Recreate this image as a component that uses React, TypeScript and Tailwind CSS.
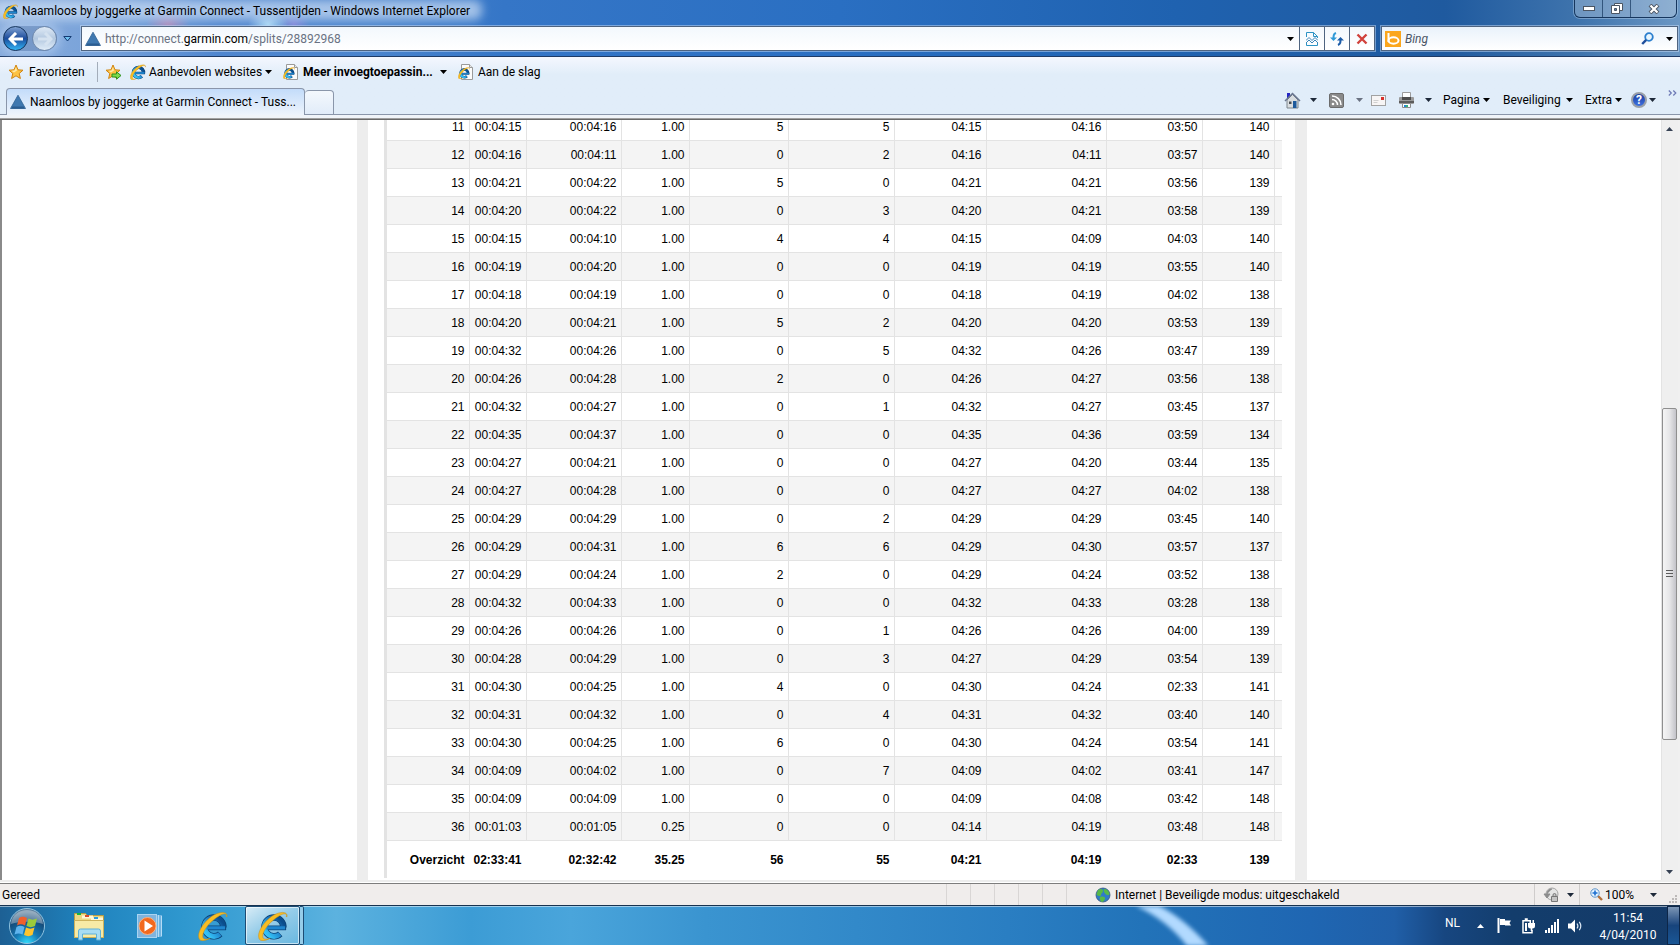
import { useId, useState } from "react";
import type { ReactNode } from "react";

const PAGE_TITLE = "Naamloos by joggerke at Garmin Connect - Tussentijden";
const PAGE_URL = "http://connect.garmin.com/splits/28892968";

// lap, time, moving time, distance, gain, loss, avg pace, moving pace, best pace, heart rate
const SPLITS = [
  ["11", "00:04:15", "00:04:16", "1.00", "5", "5", "04:15", "04:16", "03:50", "140"],
  ["12", "00:04:16", "00:04:11", "1.00", "0", "2", "04:16", "04:11", "03:57", "140"],
  ["13", "00:04:21", "00:04:22", "1.00", "5", "0", "04:21", "04:21", "03:56", "139"],
  ["14", "00:04:20", "00:04:22", "1.00", "0", "3", "04:20", "04:21", "03:58", "139"],
  ["15", "00:04:15", "00:04:10", "1.00", "4", "4", "04:15", "04:09", "04:03", "140"],
  ["16", "00:04:19", "00:04:20", "1.00", "0", "0", "04:19", "04:19", "03:55", "140"],
  ["17", "00:04:18", "00:04:19", "1.00", "0", "0", "04:18", "04:19", "04:02", "138"],
  ["18", "00:04:20", "00:04:21", "1.00", "5", "2", "04:20", "04:20", "03:53", "139"],
  ["19", "00:04:32", "00:04:26", "1.00", "0", "5", "04:32", "04:26", "03:47", "139"],
  ["20", "00:04:26", "00:04:28", "1.00", "2", "0", "04:26", "04:27", "03:56", "138"],
  ["21", "00:04:32", "00:04:27", "1.00", "0", "1", "04:32", "04:27", "03:45", "137"],
  ["22", "00:04:35", "00:04:37", "1.00", "0", "0", "04:35", "04:36", "03:59", "134"],
  ["23", "00:04:27", "00:04:21", "1.00", "0", "0", "04:27", "04:20", "03:44", "135"],
  ["24", "00:04:27", "00:04:28", "1.00", "0", "0", "04:27", "04:27", "04:02", "138"],
  ["25", "00:04:29", "00:04:29", "1.00", "0", "2", "04:29", "04:29", "03:45", "140"],
  ["26", "00:04:29", "00:04:31", "1.00", "6", "6", "04:29", "04:30", "03:57", "137"],
  ["27", "00:04:29", "00:04:24", "1.00", "2", "0", "04:29", "04:24", "03:52", "138"],
  ["28", "00:04:32", "00:04:33", "1.00", "0", "0", "04:32", "04:33", "03:28", "138"],
  ["29", "00:04:26", "00:04:26", "1.00", "0", "1", "04:26", "04:26", "04:00", "139"],
  ["30", "00:04:28", "00:04:29", "1.00", "0", "3", "04:27", "04:29", "03:54", "139"],
  ["31", "00:04:30", "00:04:25", "1.00", "4", "0", "04:30", "04:24", "02:33", "141"],
  ["32", "00:04:31", "00:04:32", "1.00", "0", "4", "04:31", "04:32", "03:40", "140"],
  ["33", "00:04:30", "00:04:25", "1.00", "6", "0", "04:30", "04:24", "03:54", "141"],
  ["34", "00:04:09", "00:04:02", "1.00", "0", "7", "04:09", "04:02", "03:41", "147"],
  ["35", "00:04:09", "00:04:09", "1.00", "0", "0", "04:09", "04:08", "03:42", "148"],
  ["36", "00:01:03", "00:01:05", "0.25", "0", "0", "04:14", "04:19", "03:48", "148"],
];

const SUMMARY = ["02:33:41", "02:32:42", "35.25", "56", "55", "04:21", "04:19", "02:33", "139"];

/* ---------- icons ---------- */

function IeIcon({ className }: { className: string }) {
  const id = useId();
  return (
    <svg viewBox="0 0 32 32" className={className} aria-hidden="true">
      <defs>
        <linearGradient id={id} x1="0" y1="0" x2="0" y2="1">
          <stop offset="0" stopColor="#0b4d8c" />
          <stop offset="0.45" stopColor="#1d7fc9" />
          <stop offset="1" stopColor="#35c1f5" />
        </linearGradient>
      </defs>
      <circle cx="17" cy="17" r="10" fill="none" stroke="#0a3f73" strokeWidth="7" strokeDasharray="54.500 8.300" transform="rotate(48 17 17)" />
      <path d="M9 18H30" stroke="#0a3f73" strokeWidth="5" />
      <circle cx="17" cy="17" r="10" fill="none" stroke={`url(#${id})`} strokeWidth="5.500" strokeDasharray="53.500 9.300" transform="rotate(50 17 17)" />
      <path d="M9 18H29" stroke="#1f86cf" strokeWidth="3.500" />
      <path
        d="M31 6C32 0 23 0 14 6 5 13-1 23 1 29c1 4 7 3 12 0-5 2-8 1-8-2 0-5 5-12 11-17C22 5 28 1.500 30 3.500c.6.800.500 1.500 0 2.500z"
        fill="#f7bd24"
        stroke="#c98a10"
        strokeWidth="0.5"
      />
    </svg>
  );
}

function PageIcon() {
  return (
    <span className="relative block h-4 w-4">
      <svg viewBox="0 0 16 16" className="absolute inset-0 size-4" aria-hidden="true">
        <path d="M3.500.5h8l3 3v12h-11z" fill="#fbfbfb" stroke="#9a9a9a" />
        <path d="M11.500.5v3h3" fill="#e8e8e8" stroke="#9a9a9a" />
      </svg>
      <IeIcon className="absolute top-[3px] left-0 size-3" />
    </span>
  );
}

function GarminIcon() {
  return (
    <svg viewBox="0 0 16 16" className="h-4 w-4 shrink-0" aria-hidden="true">
      <path d="M8 1.200 15.500 14.500H.5z" fill="#3f78b0" stroke="#2f6193" strokeWidth="0.8" strokeLinejoin="round" />
      <path d="M2.500 12.500h11l1.200 2H1.300z" fill="#2b5c90" />
    </svg>
  );
}

function StarIcon({ add = false }: { add?: boolean }) {
  return (
    <svg viewBox="0 0 17 16" className="h-4 w-[17px]" aria-hidden="true">
      <path
        d="M8 1l2 4.800 5 .4-3.800 3.300 1.200 5L8 11.800 3.600 14.500l1.200-5L1 6.200l5-.4z"
        fill="#fdc343"
        stroke="#d08411"
        strokeLinejoin="round"
      />
      <path d="M8 3l1 3.500-3 2-2.500-1.800 3-.2z" fill="#ffe9a6" />
      {add && <path d="M7 10h4.500V7.800L16 11.500l-4.500 3.700V13H7z" fill="#7fdc4c" stroke="#2f8f1d" />}
    </svg>
  );
}

function Caret({ className = "text-black" }: { className?: string }) {
  return (
    <svg viewBox="0 0 7 4" className={`h-1 w-[7px] shrink-0 ${className}`} aria-hidden="true">
      <path d="M0 0h7L3.500 4z" fill="currentColor" />
    </svg>
  );
}

function HomeIcon() {
  return (
    <svg viewBox="0 0 17 17" className="size-[17px]" aria-hidden="true">
      <path d="M3 1h3v5H3z" fill="#2525c4" />
      <path d="M3 8l5.500-5.500L14 8v8H3z" fill="#d9dde0" stroke="#7d858c" />
      <path d="M1 9l7.500-7.500L16 9" fill="none" stroke="#6a7690" strokeWidth="1.500" />
      <path d="M9 9h3.500v7H9z" fill="#1e5a9c" />
      <path d="M5 9.500h2.500V12H5z" fill="#4a4f55" />
    </svg>
  );
}

function FeedIcon() {
  return (
    <svg viewBox="0 0 15 15" className="size-[15px]" aria-hidden="true">
      <rect x="0.500" y="0.500" width="14" height="14" rx="1.500" fill="#8a8a8a" stroke="#6c6c6c" />
      <circle cx="4" cy="11" r="1.300" fill="#fff" />
      <path d="M3 6.500A5.500 5.500 0 0 1 8.500 12M3 3a9 9 0 0 1 9 9" fill="none" stroke="#fff" strokeWidth="1.500" />
    </svg>
  );
}

function MailIcon() {
  return (
    <svg viewBox="0 0 15 11" className="h-[11px] w-[15px]" aria-hidden="true">
      <rect x="0.500" y="0.500" width="14" height="10" fill="#f7f5f5" stroke="#a2a2a2" />
      <path d="M2.500 5.500h5M2.500 7.500h4" stroke="#d0d0d0" />
      <rect x="10" y="2" width="3" height="3" fill="#d8302a" />
    </svg>
  );
}

function PrinterIcon() {
  return (
    <svg viewBox="0 0 17 16" className="h-4 w-[17px]" aria-hidden="true">
      <path d="M4.500.5h8V7h-8z" fill="#fff" stroke="#9c9c9c" />
      <rect x="1" y="5" width="15" height="7" rx="1" fill="#9a9a9a" />
      <path d="M4 5h9v3H4z" fill="#4e4e4e" />
      <path d="M1 9h15v2H1z" fill="#5c5c5c" />
      <path d="M4.500 11.500h8v4h-8z" fill="#fff" stroke="#8b8b8b" />
      <path d="M6 13h2v2H6z" fill="#2387d6" />
      <path d="M8 13h2v2H8z" fill="#37b37a" />
    </svg>
  );
}

function HelpIcon() {
  return (
    <span className="flex size-4 items-center justify-center rounded-full border-2 border-[#9aa0a8] bg-linear-to-b from-[#1a3aa0] to-[#3f72e0] text-xs leading-3 font-bold text-white">
      ?
    </span>
  );
}

function StartOrb() {
  const id = useId();
  return (
    <svg viewBox="0 0 38 38" className="size-[38px]" aria-hidden="true">
      <defs>
        <radialGradient id={id} cx="0.5" cy="1" r="0.900">
          <stop offset="0" stopColor="#33e0ff" />
          <stop offset="0.400" stopColor="#1479b5" />
          <stop offset="0.800" stopColor="#154a78" />
          <stop offset="1" stopColor="#5c7f9c" />
        </radialGradient>
      </defs>
      <circle cx="19" cy="19" r="17.500" fill={`url(#${id})`} stroke="#8fc3e0" />
      <path d="M3 17C4 8 11 3 19 3s15 5 16 14c-9-3-23-3-32 0z" fill="#fff" opacity="0.350" />
      <path d="M11 11c3-2 5-1.500 8 0l-2 7.500c-3-1.500-5-1.700-8 0z" fill="#f0602c" />
      <path d="M20.500 11.500c3 1.500 5 1.500 8.500 0L27 19c-3 1.500-5.500 1.500-8.500 0z" fill="#9ccb3b" />
      <path d="M8.500 20c3-1.700 5-1.500 8 0l-2 7.500c-3-1.500-5-1.500-8 0z" fill="#5fb4ee" />
      <path d="M18 20.500c3 1.500 5.500 1.500 8.500 0l-2 7.500c-3 1.500-5.500 1.500-8.500 0z" fill="#fcc42e" />
    </svg>
  );
}

function ExplorerIcon() {
  return (
    <svg viewBox="0 0 33 30" className="h-[30px] w-[33px]" aria-hidden="true">
      <path d="M1.500 2.500h11l2 2h16v22h-29z" fill="#edd983" stroke="#b99b43" />
      <path d="M4 2h4v2H4z" fill="#16b33c" />
      <path d="M9 4.500h11v3H9z" fill="#fff7d8" />
      <path d="M12 4h4v2h-4z" fill="#d84a2c" />
      <path d="M18 6.500h12v3H18z" fill="#fff7d8" />
      <path d="M21 6h4v2h-4z" fill="#2b9be0" />
      <path d="M1.500 9.500h29v17h-29z" fill="#f7eaa6" stroke="#cdb25c" />
      <path d="M5.500 29V20q0-2 2-2h18q2 0 2 2v9h-4v-6h-14v6z" fill="#a8dcf3" stroke="#5fb0d8" />
    </svg>
  );
}

function MediaPlayerIcon() {
  return (
    <svg viewBox="0 0 28 26" className="h-[26px] w-7" aria-hidden="true">
      <path d="M19 2h6v22h-6z" fill="#6fb3e0" />
      <path d="M21.500 2v22M24.500 3v20" stroke="#b5dcf5" />
      <rect x="0.500" y="1.500" width="19" height="23" fill="#7fb4de" stroke="#a9d4f1" />
      <circle cx="10.500" cy="13" r="8.500" fill="#f2691e" stroke="#fbb07f" />
      <path d="M7.500 7.500v11l8.500-5.500z" fill="#fff" />
    </svg>
  );
}

function GlobeIcon() {
  return (
    <svg viewBox="0 0 16 16" className="size-4" aria-hidden="true">
      <circle cx="8" cy="8" r="7" fill="#2f7bc8" stroke="#36577c" strokeWidth="0.800" />
      <path d="M3 3c3-2 5-1 5 1S6 6 6 8 3 9 1.500 7.500zM9 2c3 0 5 2 5.500 5-1 2-3 1-4 0S8 4 9 2zM5 10c3-1 6 0 5 2s-2 3-3 3-3-3-2-5z" fill="#58b947" />
    </svg>
  );
}

/* ---------- browser chrome ---------- */

function WindowControls() {
  return (
    <div className="flex h-[18px] w-[103px] shrink-0 overflow-hidden rounded-b-md border border-t-0 border-[#16365e] bg-white/25 shadow-[0_0_0_1px_rgba(190,215,240,0.4)]">
      <button type="button" aria-label="Minimaliseren" className="flex w-7 items-center justify-center border-r border-[#16365e]/70">
        <svg viewBox="0 0 12 5" className="h-[5px] w-3">
          <rect x="0.500" y="0.500" width="11" height="4" fill="#fff" stroke="#4b5563" />
        </svg>
      </button>
      <button type="button" aria-label="Herstellen" className="flex w-7 items-center justify-center border-r border-[#16365e]/70">
        <svg viewBox="0 0 12 11" className="h-[11px] w-3">
          <path d="M3.500.5h8v7h-8z" fill="#fff" stroke="#4b5563" />
          <path d="M.5 2.500h8v8h-8z" fill="#fff" stroke="#4b5563" />
          <path d="M3.500 5.500h2v2h-2z" fill="#5e86b5" stroke="#4b5563" />
        </svg>
      </button>
      <button type="button" aria-label="Sluiten" className="flex flex-1 items-center justify-center">
        <svg viewBox="0 0 12 10" className="h-2.5 w-3">
          <path d="M2 1l8 8M10 1L2 9" stroke="#4b5563" strokeWidth="4" />
          <path d="M2.500 1.500l7 7M9.500 1.500l-7 7" stroke="#fff" strokeWidth="2.200" />
        </svg>
      </button>
    </div>
  );
}

function TitleBar() {
  return (
    <div className="flex h-[26px] items-start justify-between pr-[3px]">
      <div className="relative flex items-center gap-1 pt-[3px] pl-[3px]">
        <span className="absolute top-0 -right-3 -left-2 h-5 rounded-lg bg-[#cfe0f5]/70 blur-[5px]" />
        <IeIcon className="relative size-[15px]" />
        <h1 className="relative text-xs text-black">{PAGE_TITLE} - Windows Internet Explorer</h1>
      </div>
      <WindowControls />
    </div>
  );
}

function AddressField() {
  const [isEditing, setIsEditing] = useState(false);
  const [url, setUrl] = useState(PAGE_URL);

  if (isEditing) {
    return (
      <input
        autoFocus
        aria-label="Adres"
        value={url}
        onChange={(e) => setUrl(e.target.value)}
        onBlur={() => setIsEditing(false)}
        className="h-full flex-1 bg-transparent text-xs outline-none"
      />
    );
  }

  const [, before, domain, after] = url.match(/^(.*?)([^./]+\.[^./]+)(\/.*)$/) ?? ["", "", url, ""];

  return (
    <button type="button" onClick={() => setIsEditing(true)} className="h-full flex-1 cursor-text text-left text-xs text-gray-500">
      {before}
      <span className="text-black">{domain}</span>
      {after}
    </button>
  );
}

function NavigationBar() {
  return (
    <div className="flex h-[30px] items-start pl-[3px]">
      <div className="flex w-[77px] items-center">
        <div className="flex items-center gap-1 rounded-full bg-[#6f8fbd]/60 shadow-[0_0_10px_4px_rgba(205,225,250,0.45)]">
          <button type="button" aria-label="Terug" className="flex size-[25px] items-center justify-center rounded-full border border-[#16365e] bg-linear-to-b from-[#7d9fd0] via-[#1c4c9c] to-[#35b5f5]">
            <svg viewBox="0 0 16 14" className="h-3.5 w-4">
              <path d="M8 1L2 7l6 6M2.500 7H15" fill="none" stroke="#fff" strokeWidth="3" />
            </svg>
          </button>
          <button type="button" aria-label="Vooruit" disabled className="flex size-[25px] items-center justify-center rounded-full border border-[#6d87ab] bg-linear-to-b from-[#dfeaf6] via-[#b3c8e0] to-[#e0ecf8]">
            <svg viewBox="0 0 16 14" className="h-3.5 w-4">
              <path d="M8 1l6 6-6 6M13.500 7H1" fill="none" stroke="#d5e2f0" strokeWidth="3" />
            </svg>
          </button>
        </div>
        <button type="button" aria-label="Recente pagina's" className="ml-1.5">
          <svg viewBox="0 0 9 6" className="h-1.5 w-[9px]">
            <path d="M.8.5h7.400L4.500 5z" fill="#6fc0f0" stroke="#143a72" />
          </svg>
        </button>
      </div>

      <div className="ml-px flex h-[25px] flex-1 items-stretch border border-[#4f6480] bg-linear-to-b from-[#f3f8fd] to-white shadow-[0_0_0_1px_rgba(200,220,245,0.5)]">
        <div className="flex flex-1 items-center gap-1 pl-[3px]">
          <GarminIcon />
          <AddressField />
        </div>
        <button type="button" aria-label="Adreslijst" className="flex w-[17px] items-center justify-center">
          <Caret />
        </button>
        <button type="button" aria-label="Compatibiliteitsweergave" className="flex w-[25px] items-center justify-center border-l border-[#4f6480]">
          <svg viewBox="0 0 12 14" className="h-3.5 w-3">
            <path d="M.5 5V.5h7l4 4V6M.5 10v3.500h11V10M7.500.5v4h4" fill="none" stroke="#2d93c4" />
            <path d="M0 8.500l3-3 3 3 3-3 3 3M0 11l3-3 3 3 3-3 3 3" fill="none" stroke="#3c85b8" />
          </svg>
        </button>
        <button type="button" aria-label="Vernieuwen" className="flex w-[25px] items-center justify-center border-l border-[#4f6480]">
          <svg viewBox="0 0 14 14" className="size-3.5">
            <path d="M6 1C3.500 2 3.500 3.500 3.500 7" fill="none" stroke="#2f9ad8" strokeWidth="2" />
            <path d="M0 5.500h7L3.500 9z" fill="#2f9ad8" />
            <path d="M8 13c2.500-1 2.500-2.500 2.500-6" fill="none" stroke="#1c5ca8" strokeWidth="2" />
            <path d="M7 8.500h7L10.500 5z" fill="#1c5ca8" />
          </svg>
        </button>
        <button type="button" aria-label="Stoppen" className="flex w-[25px] items-center justify-center border-l border-[#4f6480]">
          <svg viewBox="0 0 12 12" className="size-3">
            <path d="M1.500 1.500l9 9M10.500 1.500l-9 9" stroke="#d1423c" strokeWidth="2.400" />
          </svg>
        </button>
      </div>

      <form className="mr-0.5 ml-1.5 flex h-[25px] w-[297px] items-center border border-[#4f6480] bg-linear-to-b from-[#e9f2fb] to-white pl-[3px] shadow-[0_0_0_1px_rgba(200,220,245,0.5)]">
        <svg viewBox="0 0 16 16" className="size-4" aria-hidden="true">
          <path d="M0 0h16v16H0z" fill="#fba61c" />
          <path d="M3.500 2v9" stroke="#fff" strokeWidth="2" />
          <ellipse cx="8.500" cy="9.500" rx="5" ry="3.200" fill="none" stroke="#fff" strokeWidth="2" />
        </svg>
        <input aria-label="Zoeken" placeholder="Bing" className="ml-1 h-full min-w-0 flex-1 bg-transparent text-xs italic outline-none placeholder:text-gray-600" />
        <button type="submit" aria-label="Zoeken met Bing" className="pr-2">
          <svg viewBox="0 0 13 13" className="size-[13px]">
            <circle cx="8" cy="5" r="3.800" fill="#e8f6ff" stroke="#2c7fce" strokeWidth="1.800" />
            <path d="M5.200 7.800L1.200 12" stroke="#1f4f9c" strokeWidth="2.400" />
          </svg>
        </button>
        <button type="button" aria-label="Zoekopties" className="px-1">
          <Caret />
        </button>
      </form>
    </div>
  );
}

function FavoritesBar() {
  return (
    <div className="flex h-[31px] items-center pb-0.5 pl-2 text-xs">
      <button type="button" className="flex w-[88px] items-center gap-1">
        <StarIcon />
        Favorieten
      </button>
      <span className="ml-px h-5 w-px bg-[#a3adba]" />
      <button type="button" aria-label="Toevoegen aan de werkbalk Favorieten" className="ml-[7px]">
        <StarIcon add />
      </button>
      <button type="button" className="ml-2 flex w-[153px] items-center">
        <IeIcon className="size-4" />
        <span className="ml-[3px] flex-1 text-left whitespace-nowrap">Aanbevolen websites</span>
        <span className="pr-[11px]">
          <Caret />
        </span>
      </button>
      <button type="button" className="flex w-[175px] items-center font-bold">
        <PageIcon />
        <span className="ml-1 flex-1 text-left whitespace-nowrap">Meer invoegtoepassin...</span>
        <span className="pr-[11px]">
          <Caret />
        </span>
      </button>
      <a href="#aan-de-slag" className="flex items-center gap-1">
        <PageIcon />
        Aan de slag
      </a>
    </div>
  );
}

function MenuButton({ label, className }: { label: string; className: string }) {
  return (
    <button type="button" className={`flex items-center justify-between ${className}`}>
      {label}
      <Caret />
    </button>
  );
}

function CommandBar() {
  return (
    <div className="flex h-full items-center pb-0.5 text-xs">
      <button type="button" aria-label="Startpagina" className="flex w-[45px] items-center gap-2">
        <HomeIcon />
        <Caret className="ml-px text-gray-800" />
      </button>
      <button type="button" aria-label="Feeds" disabled className="flex w-[42px] items-center gap-3">
        <FeedIcon />
        <Caret className="text-gray-500" />
      </button>
      <button type="button" aria-label="E-mail lezen" className="w-[27px]">
        <MailIcon />
      </button>
      <button type="button" aria-label="Afdrukken" className="flex w-[45px] items-center gap-2.5">
        <PrinterIcon />
        <Caret className="text-gray-800" />
      </button>
      <MenuButton label="Pagina" className="mr-[13px] w-[47px]" />
      <MenuButton label="Beveiliging" className="mr-3 w-[70px]" />
      <MenuButton label="Extra" className="mr-[9px] w-[37px]" />
      <button type="button" aria-label="Help" className="flex items-center gap-0.5">
        <HelpIcon />
        <Caret className="text-gray-800" />
      </button>
      <button type="button" aria-label="Meer opdrachten" className="mr-[3px] ml-3 self-start pt-0.5">
        <svg viewBox="0 0 9 6" className="h-1.5 w-[9px]">
          <path d="M.8.5L3.300 3 .8 5.500M5.300.5L7.800 3 5.300 5.500" fill="none" stroke="#6d78b5" strokeWidth="1.200" />
        </svg>
      </button>
    </div>
  );
}

function TabBar() {
  return (
    <div className="flex h-[27px] items-stretch justify-between">
      <div className="flex flex-1 items-end">
        <span className="w-1.5 self-stretch border-b border-[#8a96aa]" />
        <button type="button" className="flex h-[27px] w-[299px] items-center gap-1 rounded-t border border-b-0 border-[#8a96aa] bg-linear-to-b from-[#c3dcfa] to-[#eef4fc] pl-[3px] text-xs">
          <GarminIcon />
          <span className="whitespace-nowrap">Naamloos by joggerke at Garmin Connect - Tuss...</span>
        </button>
        <button type="button" aria-label="Nieuw tabblad" className="h-[25px] w-[29px] rounded-t border border-l-0 border-[#8a96aa] bg-linear-to-b from-[#f4f8fd] to-[#e1ecf9]" />
        <span className="flex-1 self-stretch border-b border-[#8a96aa]" />
      </div>
      <div className="border-b border-[#8a96aa]">
        <CommandBar />
      </div>
    </div>
  );
}

/* ---------- page ---------- */

function SplitsTable() {
  return (
    <table className="w-full table-fixed border-separate border-spacing-0 border-l-[3px] border-[#e3e3e3] text-right text-xs text-black">
      <colgroup>
        <col className="w-[83px]" />
        <col className="w-[57px]" />
        <col className="w-[95px]" />
        <col className="w-[68px]" />
        <col className="w-[99px]" />
        <col className="w-[106px]" />
        <col className="w-[92px]" />
        <col className="w-[120px]" />
        <col className="w-[96px]" />
        <col className="w-[72px]" />
        <col />
      </colgroup>
      <tbody>
        {SPLITS.map(([lap, ...values]) => (
          <tr key={lap} className="h-7 even:bg-[#f4f4f4]">
            <th scope="row" className="border-r border-b border-[#e3e3e3] p-0 pr-1 text-right font-normal">
              {lap}
            </th>
            {values.map((value, i) => (
              <td key={i} className="border-r border-b border-[#e3e3e3] p-0 pr-1">
                {value}
              </td>
            ))}
            <td className="border-b border-[#e3e3e3] p-0" />
          </tr>
        ))}
      </tbody>
      <tfoot>
        <tr className="h-[37px] font-bold">
          <th scope="row" className="p-0 pr-[5px] text-right">
            Overzicht
          </th>
          {SUMMARY.map((value, i) => (
            <td key={i} className="p-0 pr-[5px]">
              {value}
            </td>
          ))}
          <td className="p-0" />
        </tr>
      </tfoot>
    </table>
  );
}

function Scrollbar() {
  return (
    <div className="flex w-[17px] shrink-0 flex-col items-stretch border-l border-[#e3e3e3] bg-[#efefef] pr-px">
      <button type="button" aria-label="Omhoog" className="flex h-[17px] items-center justify-center">
        <Caret className="rotate-180 text-gray-700" />
      </button>
      <div className="flex-[272]" />
      <div className="flex flex-[331] items-center justify-center rounded-xs border border-[#8f8f8f] bg-linear-to-r from-[#f5f5f5] via-[#e6e6e8] to-[#c3c3c9]">
        <svg viewBox="0 0 7 8" className="h-2 w-[7px]" aria-hidden="true">
          <path d="M0 .5h7M0 3.500h7M0 6.500h7" stroke="#5c5c5c" />
        </svg>
      </div>
      <div className="flex-[123]" />
      <button type="button" aria-label="Omlaag" className="flex h-[17px] items-center justify-center">
        <Caret className="text-gray-700" />
      </button>
    </div>
  );
}

function StatusBar() {
  return (
    <footer className="flex h-[22px] shrink-0 items-center border-t border-[#7d7d7d] bg-[#f0edec] pl-0.5 text-xs">
      <span className="flex-1">Gereed</span>
      <div className="flex items-stretch self-stretch">
        {[0, 1, 2, 3, 4].map((i) => (
          <span key={i} className="w-6 border-l border-[#d9d6d5]" />
        ))}
      </div>
      <div className="flex h-full w-[468px] items-center gap-1 border-l border-[#d9d6d5] pl-7">
        <GlobeIcon />
        Internet | Beveiligde modus: uitgeschakeld
      </div>
      <button type="button" aria-label="Beveiligde modus" className="flex h-full w-[45px] items-center gap-2 border-l border-[#cfcccb] pl-2">
        <svg viewBox="0 0 16 16" className="size-4">
          <circle cx="9" cy="7" r="6" fill="#e4e4e4" stroke="#a5a5a5" />
          <path d="M1 7h6L4 11zM4 7c0-3 2-5 5-5" fill="#8c8c8c" stroke="#8c8c8c" />
          <path d="M8.500 9.500h6v5h-6zM10 9.500v-1.500q0-1.500 1.500-1.500T13 8v1.500" fill="#c4c4c4" stroke="#777" />
        </svg>
        <Caret className="text-gray-800" />
      </button>
      <button type="button" className="flex h-full w-[89px] items-center border-l border-[#cfcccb] pl-2.5">
        <svg viewBox="0 0 13 13" className="size-[13px]" aria-hidden="true">
          <path d="M8 8l4 4" stroke="#b3713c" strokeWidth="2.400" />
          <circle cx="5" cy="5" r="4.200" fill="#e6f3ff" stroke="#5d93c8" />
          <path d="M2.500 5h5M5 2.500v5" stroke="#1d6fd0" strokeWidth="1.600" />
        </svg>
        <span className="ml-0.5 flex-1 text-left">100%</span>
        <Caret className="mr-[11px] text-gray-800" />
      </button>
      <svg viewBox="0 0 10 10" className="mr-0.5 mb-px size-2.5 self-end" aria-hidden="true">
        <path d="M7 1h2v2H7zM7 4h2v2H7zM7 7h2v2H7zM4 4h2v2H4zM4 7h2v2H4zM1 7h2v2H1z" fill="#bdb9b8" />
      </svg>
    </footer>
  );
}

/* ---------- taskbar ---------- */

function TaskButton({ label, className, children }: { label: string; className: string; children: ReactNode }) {
  return (
    <button type="button" aria-label={label} className={`flex items-center justify-center ${className}`}>
      {children}
    </button>
  );
}

function Tray() {
  return (
    <div className="relative flex items-stretch text-xs text-white">
      <button type="button" className="mb-1.5 self-center pr-[17px]">
        NL
      </button>
      <button type="button" aria-label="Verborgen pictogrammen" className="flex items-center pr-[13px]">
        <Caret className="rotate-180" />
      </button>
      <button type="button" aria-label="Onderhoudscentrum" className="w-[25px]">
        <svg viewBox="0 0 15 15" className="size-[15px]">
          <path d="M1.500 0v15" stroke="#fff" strokeWidth="2" />
          <path d="M3 1h5v1.500h6L12.500 5 14 7.500H8V7H3z" fill="#fff" />
        </svg>
      </button>
      <button type="button" aria-label="Batterij" className="w-[23px]">
        <svg viewBox="0 0 14 16" className="h-4 w-3.5">
          <path d="M8 2.800H5V1H3.500v1.800H1v12h9V12" fill="none" stroke="#fff" strokeWidth="1.500" />
          <path d="M6 5h7v3q0 2.500-2.700 2.500V13H8.700v-2.500Q6 10.500 6 8zM7.500 2H9v3H7.500zM10.500 2H12v3h-1.500z" fill="#fff" />
          <path d="M3 5h2v8H3z" fill="#fff" />
        </svg>
      </button>
      <button type="button" aria-label="Netwerk" className="w-[23px]">
        <svg viewBox="0 0 16 14" className="h-3.5 w-4">
          <path d="M0 11h2v3H0zM3 9h2v5H3zM6 6h2v8H6zM9 3h2v11H9zM12 0h2v14h-2z" fill="#fff" />
        </svg>
      </button>
      <button type="button" aria-label="Volume" className="w-[21px]">
        <svg viewBox="0 0 16 14" className="h-3.5 w-4">
          <path d="M0 4.500h3L7 .5v13L3 9.500H0z" fill="#fff" />
          <path d="M9 4.500q1.800 2.500 0 5M11.300 2.800q3 4.200 0 8.400" fill="none" stroke="#dbe7f4" strokeWidth="1.200" />
        </svg>
      </button>
      <button type="button" className="flex w-[78px] flex-col items-center justify-center pt-0.5 leading-[17px]">
        <span>11:54</span>
        <span>4/04/2010</span>
      </button>
      <button type="button" aria-label="Bureaublad weergeven" className="w-[13px] border border-[#0d2648] bg-linear-to-b from-[#7d96b5] via-[#17447c] to-[#1a5796]" />
    </div>
  );
}

function Taskbar() {
  return (
    <nav className="relative flex h-10 shrink-0 items-stretch justify-between overflow-hidden border-t border-[#17324f]">
      {/* wallpaper showing through the glass */}
      <div className="absolute inset-0 bg-[linear-gradient(90deg,#1d6094_0%,#1f82bd_5%,#2f98cf_11%,#45a6d8_16%,#5cb2df_20%,#3c9cd5_28%,#4aa5db_34%,#3a94d0_42%,#2a7ec2_60%,#2273b9_68%,#1f66b2_78%,#205fa8_83%,#174680_86%,#133d6c_90%,#143a68_100%)]" />
      <svg viewBox="0 0 90 40" className="absolute inset-y-0 left-[67%] h-10 w-[90px] blur-[2px]" aria-hidden="true">
        <path d="M-6-6Q38 8 64 44H86Q52 4 18-6z" fill="#b2daff" />
      </svg>
      <span className="absolute inset-x-0 top-0 h-px bg-white/50" />
      <div className="relative flex items-stretch">
        <TaskButton label="Start" className="w-[54px]">
          <StartOrb />
        </TaskButton>
        <TaskButton label="Windows Verkenner" className="w-[70px]">
          <ExplorerIcon />
        </TaskButton>
        <TaskButton label="Windows Media Player" className="w-[53px]">
          <MediaPlayerIcon />
        </TaskButton>
        <TaskButton label="Internet Explorer" className="w-[68px] pl-1">
          <IeIcon className="size-[30px]" />
        </TaskButton>
        <TaskButton
          label={PAGE_TITLE}
          className="w-[55px] rounded-xs border border-[#1c4c74] bg-linear-to-br from-white/80 via-white/40 to-white/15 shadow-[inset_0_0_0_1px_rgba(255,255,255,0.6)]"
        >
          <IeIcon className="size-[30px]" />
        </TaskButton>
        <span className="w-1 rounded-r-xs border border-l-0 border-[#1c4c74] bg-white/40" />
      </div>
      <Tray />
    </nav>
  );
}

export default function App() {
  return (
    <div className="flex h-screen min-w-[1200px] flex-col overflow-hidden bg-white font-['Roboto','Liberation_Sans',sans-serif] text-black">
      <header className="shrink-0">
        <div className="h-[57px] border-b border-[#1d3a66] bg-[radial-gradient(ellipse_22px_14px_at_168px_24px,rgba(214,130,170,0.6),transparent),radial-gradient(ellipse_20px_14px_at_268px_24px,rgba(190,235,255,0.8),transparent),radial-gradient(ellipse_16px_12px_at_294px_24px,rgba(170,130,225,0.5),transparent),linear-gradient(90deg,#86aadb_0%,#79a3da_6%,#4f86cf_13%,#4a84cd_22%,#3576c7_30%,#2a6fc2_50%,#1f62b0_70%,#1f5a9f_86%,#3f74ad_94%,#6b97c4_100%)]">
          <TitleBar />
          <NavigationBar />
        </div>
        <div className="bg-linear-to-b from-[#f4f7fe] to-[#e1edf9] to-30%">
          <FavoritesBar />
          <TabBar />
        </div>
        <div className="h-[5px] border-b border-[#696969] bg-[#f0f4f9] shadow-[inset_0_-1px_0_#a0a0a0]" />
      </header>

      <div className="flex min-h-0 flex-1 border-r-2 border-l-2 border-r-[#f0f0f0] border-l-[#8a8a8a] bg-white font-['Liberation_Sans',Arial,sans-serif]">
        <main className="flex min-w-0 flex-1 flex-col items-center justify-end overflow-hidden">
          <div className="w-[950px] border-r-[12px] border-l-[11px] border-[#ededed] pr-[13px] pb-0.5 pl-4">
            <SplitsTable />
          </div>
        </main>
        <Scrollbar />
      </div>
      <div className="h-[3px] shrink-0 border-b border-white bg-[#ededed]" />

      <StatusBar />
      <Taskbar />
    </div>
  );
}
